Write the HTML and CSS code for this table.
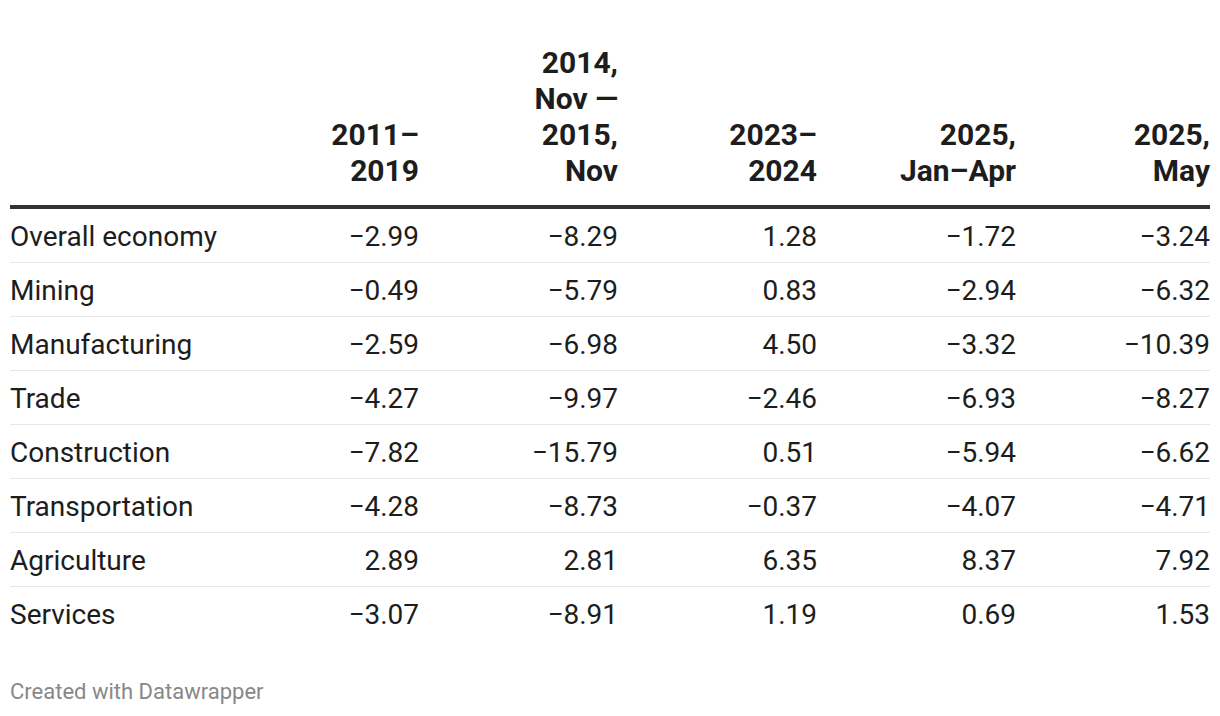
FILE: index.html
```html
<!DOCTYPE html>
<html lang="en">
<head>
<meta charset="utf-8">
<link rel="stylesheet" href="styles.css">
</head>
<body>
<div class="chart">
  <table class="dtable">
    <colgroup>
      <col class="c-label">
      <col class="c-num">
      <col class="c-num">
      <col class="c-num">
      <col class="c-num">
      <col class="c-last">
    </colgroup>
    <thead>
      <tr>
        <th class="label"></th>
        <th>2011–<br>2019</th>
        <th>2014,<br>Nov —<br>2015,<br>Nov</th>
        <th>2023–<br>2024</th>
        <th>2025,<br>Jan–Apr</th>
        <th class="last">2025,<br>May</th>
      </tr>
    </thead>
    <tbody>
      <tr><td class="label">Overall economy</td><td>−2.99</td><td>−8.29</td><td>1.28</td><td>−1.72</td><td class="last">−3.24</td></tr>
      <tr><td class="label">Mining</td><td>−0.49</td><td>−5.79</td><td>0.83</td><td>−2.94</td><td class="last">−6.32</td></tr>
      <tr><td class="label">Manufacturing</td><td>−2.59</td><td>−6.98</td><td>4.50</td><td>−3.32</td><td class="last">−10.39</td></tr>
      <tr><td class="label">Trade</td><td>−4.27</td><td>−9.97</td><td>−2.46</td><td>−6.93</td><td class="last">−8.27</td></tr>
      <tr><td class="label">Construction</td><td>−7.82</td><td>−15.79</td><td>0.51</td><td>−5.94</td><td class="last">−6.62</td></tr>
      <tr><td class="label">Transportation</td><td>−4.28</td><td>−8.73</td><td>−0.37</td><td>−4.07</td><td class="last">−4.71</td></tr>
      <tr><td class="label">Agriculture</td><td>2.89</td><td>2.81</td><td>6.35</td><td>8.37</td><td class="last">7.92</td></tr>
      <tr><td class="label">Services</td><td>−3.07</td><td>−8.91</td><td>1.19</td><td>0.69</td><td class="last">1.53</td></tr>
    </tbody>
  </table>
  <div class="footer">Created with Datawrapper</div>
</div>
</body>
</html>
```

FILE: styles.css
```css
html, body {
  margin: 0;
  padding: 0;
  background: #ffffff;
}

body {
  font-family: Roboto, "Liberation Sans", Arial, sans-serif;
  color: #1d1d1d;
}

.chart {
  padding: 45px 10px 0 10px;
}

.dtable {
  width: 1200px;
  border-collapse: collapse;
  table-layout: fixed;
}

.c-label { width: 210px; }
.c-num { width: 199px; }
.c-last { width: 194px; }

.dtable th {
  font-size: 30px;
  line-height: 36px;
  font-weight: 700;
  text-align: right;
  vertical-align: bottom;
  padding: 0 0 16px 0;
  border-bottom: 4px solid #333333;
}

.dtable td {
  font-size: 28px;
  line-height: 36px;
  font-weight: 400;
  text-align: right;
  padding: 10px 0 7px 0;
  border-bottom: 1px solid #e6e6e6;
}

.dtable tbody tr:last-child td {
  border-bottom: none;
}

.dtable .label {
  text-align: left;
}

.footer {
  margin-top: 38px;
  font-size: 22px;
  line-height: 28px;
  color: #888888;
}
```
